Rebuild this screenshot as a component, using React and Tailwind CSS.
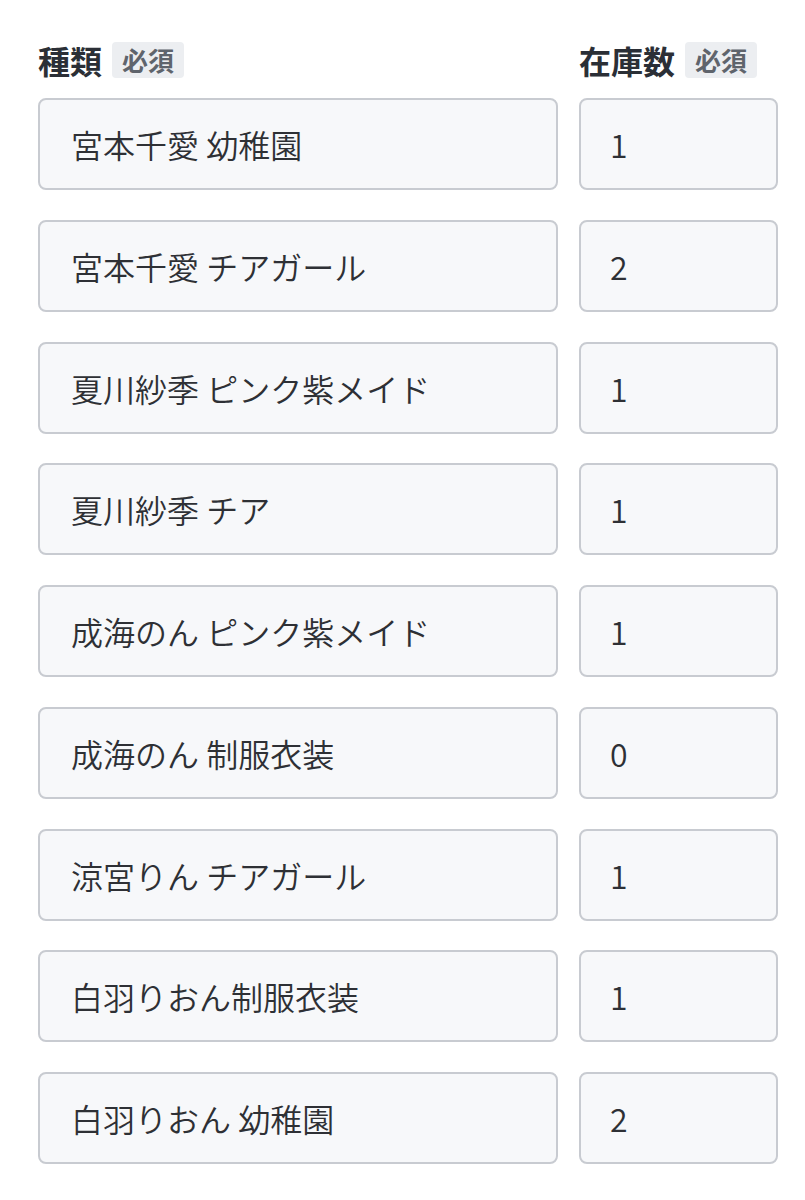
// 種類と在庫数の入力リスト
const items = [
  { name: "宮本千愛 幼稚園", stock: "1" },
  { name: "宮本千愛 チアガール", stock: "2" },
  { name: "夏川紗季 ピンク紫メイド", stock: "1" },
  { name: "夏川紗季 チア", stock: "1" },
  { name: "成海のん ピンク紫メイド", stock: "1" },
  { name: "成海のん 制服衣装", stock: "0" },
  { name: "涼宮りん チアガール", stock: "1" },
  { name: "白羽りおん制服衣装", stock: "1" },
  { name: "白羽りおん 幼稚園", stock: "2" },
];

const font = {
  fontFamily: '"Noto Sans CJK JP", "Noto Sans", sans-serif',
};

const Label = ({ text }) => (
  <div className="flex items-center gap-[10px]">
    <span className="text-[32px] font-bold text-[#2b2f36] leading-none">{text}</span>
    <span className="bg-[#eceef1] text-[#5f646c] text-[26px] font-semibold leading-none px-[10px] py-[5px] rounded-[4px]">
      必須
    </span>
  </div>
);

const Field = ({ value, className }) => (
  <div
    className={`h-[92px] flex items-center border-2 border-[#c8cbd1] bg-[#f7f8fa] rounded-[8px] text-[32px] font-[350] text-[#2e3035] ${className}`}
  >
    {value}
  </div>
);

export default function App() {
  return (
    <div className="bg-white min-h-[1200px] pl-[38px] pr-[27px] pt-[42px]" style={font}>
      <div className="flex gap-[21px] mb-[20px]">
        <div className="w-[520px]">
          <Label text="種類" />
        </div>
        <div className="w-[199px]">
          <Label text="在庫数" />
        </div>
      </div>
      <div className="flex flex-col gap-[29.75px]">
        {items.map((item, i) => (
          <div key={i} className="flex gap-[21px]">
            <Field value={item.name} className="w-[520px] pl-[31px]" />
            <Field value={item.stock} className="w-[199px] pl-[29px]" />
          </div>
        ))}
      </div>
    </div>
  );
}
